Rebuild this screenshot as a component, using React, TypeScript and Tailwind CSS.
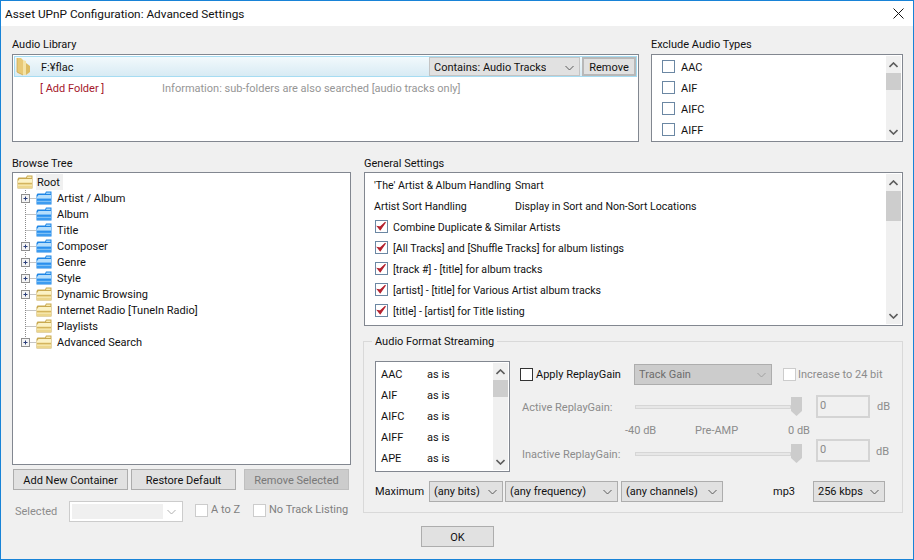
import React from "react";

type Tone = "yellow" | "blue";

const FONT = "font-['Roboto','Liberation_Sans',sans-serif]";

function Chevron({ up, color = "#6a6a6a", width = 1 }: { up?: boolean; color?: string; width?: number }) {
  return (
    <svg width="9" height="6" viewBox="0 0 9 6" fill="none" className="shrink-0">
      <path d={up ? "M0.5 5 L4.5 1 L8.5 5" : "M0.5 1 L4.5 5 L8.5 1"} stroke={color} strokeWidth={width} />
    </svg>
  );
}

function ScrollBar({ thumbHeight }: { thumbHeight: string }) {
  return (
    <div className="flex w-[15px] shrink-0 flex-col self-stretch bg-[#f0f0f0]">
      <div className="flex h-[17px] items-center justify-center">
        <Chevron up color="#5c5c5c" width={1.6} />
      </div>
      <div className="min-h-0 flex-1">
        <div className={`bg-[#cdcdcd] ${thumbHeight}`} />
      </div>
      <div className="flex h-[17px] items-center justify-center">
        <Chevron color="#5c5c5c" width={1.6} />
      </div>
    </div>
  );
}

function Check({ checked, disabled, dark }: { checked?: boolean; disabled?: boolean; dark?: boolean }) {
  const border = disabled ? "border-[#cccccc]" : dark ? "border-[#333333]" : "border-[#6b87a3]";
  return (
    <span className={`flex h-[13px] w-[13px] shrink-0 items-center justify-center border bg-white ${border}`}>
      {checked && (
        <svg width="11" height="11" viewBox="0 0 11 11">
          <path d="M1.5 5.5 L4.2 8.8 L9.5 1.2 L4.3 6 Z" fill="#b3202c" stroke="#b3202c" strokeWidth="1.1" />
        </svg>
      )}
    </span>
  );
}

function Combo({ label, className, disabled }: { label: string; className: string; disabled?: boolean }) {
  return (
    <div
      className={`flex shrink-0 items-center justify-between border pl-[4px] pr-[5px] ${
        disabled ? "border-[#adadad] bg-[#cccccc] text-[#6d6d6d]" : "border-[#adadad] bg-[#e1e1e1]"
      } ${className}`}
    >
      <span className="truncate">{label}</span>
      <Chevron color={disabled ? "#a0a0a0" : "#5a5a5a"} />
    </div>
  );
}

function Button({ label, className, disabled }: { label: string; className: string; disabled?: boolean }) {
  return (
    <button
      type="button"
      className={`flex shrink-0 items-center justify-center border pt-[2px] ${
        disabled ? "border-[#bfbfbf] bg-[#cccccc] text-[#787878]" : "border-[#adadad] bg-[#e1e1e1]"
      } ${className}`}
    >
      {label}
    </button>
  );
}

function Folder({ tone }: { tone: Tone }) {
  const edge = tone === "blue" ? "#1f86e6" : "#c9a950";
  const tab = tone === "blue" ? "#9bd2fa" : "#f8eab0";
  const top = tone === "blue" ? "#b5defc" : "#fbf2c6";
  const band = tone === "blue" ? "#2a8fee" : "#d3b45e";
  const low = tone === "blue" ? "#3d9cf0" : "#ecd68c";
  return (
    <svg width="16" height="14" viewBox="0 0 16 14" className="shrink-0">
      <path d="M0.5 4 L0.5 13.5 L15.5 13.5 L15.5 0.5 L10 0.5 L9 2.5 L1.5 2.5 Z" fill={edge} />
      <path d="M10.5 1.5 L14.5 1.5 L14.5 3 L10 3 Z" fill={tab} />
      <path d="M1 6 L2.5 4 L15 4 L15 13 L1 13 Z" fill={top} />
      <path d="M1 7.5 H15 V13 H1 Z" fill={low} />
      <path d="M1 8.5 H15" stroke={band} />
      <path d="M1 10.5 H15" stroke={top} strokeOpacity="0.55" />
    </svg>
  );
}

function SideFolder() {
  return (
    <svg width="15" height="19" viewBox="0 0 15 19" className="shrink-0">
      <path d="M1 1 L5 1 L7 3 L7 18 L2 16 L1 15 Z" fill="#e8c976" />
      <path d="M7 3 L10 4 L10 18 L7 18 Z" fill="#f4e3a6" />
      <path d="M10 6 L14 9 L14 15 L10 18 Z" fill="#dcbb62" />
      <path d="M1 1 L1 15 L7 18" fill="none" stroke="#c9a44e" strokeWidth="0.7" />
    </svg>
  );
}

function TreeRow({ label, tone, expander, last }: { label: string; tone: Tone; expander?: boolean; last?: boolean }) {
  return (
    <div className="flex h-[16px] items-center">
      <svg width="22" height="16" viewBox="0 0 22 16" className="shrink-0">
        <path d={last ? "M11.5 0 V8" : "M11.5 0 V16"} stroke="#8a8a8a" strokeDasharray="1 1" />
        <path d="M11.5 8.5 H22" stroke="#8a8a8a" strokeDasharray="1 1" />
        {expander && (
          <>
            <rect x="7.5" y="4.5" width="8" height="8" fill="#f4f4f4" stroke="#8f8f8f" />
            <path d="M9.5 8.5 H13.5 M11.5 6.5 V10.5" stroke="#2b3f7a" />
          </>
        )}
      </svg>
      <Folder tone={tone} />
      <span className="ml-[5px] whitespace-nowrap pt-[2px]">{label}</span>
    </div>
  );
}

function Slider({ className }: { className?: string }) {
  return (
    <div className={`flex h-[19px] w-[167px] shrink-0 items-center ${className ?? ""}`}>
      <div className="h-[4px] min-w-0 flex-1 border border-[#d6d6d6] bg-[#e7e7e7]" />
      <svg width="11" height="19" viewBox="0 0 11 19" className="shrink-0">
        <path d="M0 0 H11 V14 L5.5 19 L0 14 Z" fill="#cccccc" />
      </svg>
    </div>
  );
}

function NumberBox({ className }: { className?: string }) {
  return (
    <div className={`h-[23px] w-[54px] shrink-0 border-2 border-[#d4d4d4] bg-[#f0f0f0] pl-[2px] leading-[17px] text-[#8a8a8a] ${className ?? ""}`}>
      0
    </div>
  );
}

const excludeTypes = ["AAC", "AIF", "AIFC", "AIFF"];
const formats = ["AAC", "AIF", "AIFC", "AIFF", "APE"];
const generalChecks = [
  "Combine Duplicate & Similar Artists",
  "[All Tracks] and [Shuffle Tracks] for album listings",
  "[track #] - [title] for album tracks",
  "[artist] - [title] for Various Artist album tracks",
  "[title] - [artist] for Title listing",
];
const treeRows: { label: string; tone: Tone; expander?: boolean }[] = [
  { label: "Artist / Album", tone: "blue", expander: true },
  { label: "Album", tone: "blue" },
  { label: "Title", tone: "blue" },
  { label: "Composer", tone: "blue", expander: true },
  { label: "Genre", tone: "blue", expander: true },
  { label: "Style", tone: "blue", expander: true },
  { label: "Dynamic Browsing", tone: "yellow", expander: true },
  { label: "Internet Radio [TuneIn Radio]", tone: "yellow" },
  { label: "Playlists", tone: "yellow" },
];

export default function App() {
  return (
    <div className={`flex h-[560px] w-[914px] flex-col overflow-hidden border border-[#1883d7] bg-[#f0f0f0] text-[11px] leading-[18px] text-[#111111] ${FONT}`}>
      {/* title bar */}
      <div className="flex h-[25px] shrink-0 items-center justify-between bg-white pl-[4px] pr-[9px] text-[11.8px]">
        <span>Asset UPnP Configuration: Advanced Settings</span>
        <svg width="11" height="11" viewBox="0 0 11 11" fill="none">
          <path d="M0.5 0.5 L10.5 10.5 M10.5 0.5 L0.5 10.5" stroke="#111111" strokeWidth="1" />
        </svg>
      </div>

      <div className="flex min-h-0 flex-1 flex-col pl-[11px] pr-[10px]">
        {/* top row */}
        <div className="flex shrink-0 gap-[12px] pt-[11px]">
          <div className="w-[627px] shrink-0">
            <div className="h-[17px] leading-[16px]">Audio Library</div>
            <div className="h-[88px] border border-[#828790] bg-white p-[1px]">
              <div className="flex h-[21px] items-center border border-[#a6dcf2] bg-gradient-to-b from-[#f2f9fc] to-[#d8ebf4] pl-[1px]">
                <SideFolder />
                <span className="ml-[10px] min-w-0 flex-1 pt-[2px]">F:¥flac</span>
                <Combo label="Contains: Audio Tracks" className="h-[19px] w-[151px] border-[#c4c4c4] pt-[2px]" />
                <Button label="Remove" className="ml-[2px] h-[19px] w-[54px] border-2 border-[#b8b8b8]" />
              </div>
              <div className="flex h-[21px] items-center pt-[2px]">
                <span className="ml-[26px] w-[122px] text-[#a5182c]">[ Add Folder ]</span>
                <span className="text-[#969696]">Information: sub-folders are also searched [audio tracks only]</span>
              </div>
            </div>
          </div>
          <div className="w-[252px] shrink-0">
            <div className="h-[17px] leading-[16px]">Exclude Audio Types</div>
            <div className="flex h-[88px] border border-[#828790] bg-white p-[1px]">
              <div className="min-w-0 flex-1">
                {excludeTypes.map((t) => (
                  <div key={t} className="flex h-[21px] items-center pl-[9px]">
                    <Check />
                    <span className="ml-[6px] pt-[2px]">{t}</span>
                  </div>
                ))}
              </div>
              <ScrollBar thumbHeight="h-[17px]" />
            </div>
          </div>
        </div>

        {/* middle row */}
        <div className="mt-[14px] flex shrink-0 gap-[13px]">
          <div className="w-[339px] shrink-0">
            <div className="h-[16px] leading-[16px]">Browse Tree</div>
            <div className="h-[293px] border border-[#828790] bg-white pl-[1px] pt-[1px]">
              <div className="flex h-[16px] items-center pl-[3px]">
                <Folder tone="yellow" />
                <span className="ml-[3px] h-[16px] bg-[#f0f0f0] pl-[1px] pr-[3px]">Root</span>
              </div>
              {treeRows.map((r) => (
                <TreeRow key={r.label} {...r} />
              ))}
              <TreeRow label="Advanced Search" tone="yellow" expander last />
            </div>
            <div className="mt-[4px] flex pl-[1px]">
              <Button label="Add New Container" className="h-[21px] w-[115px]" />
              <Button label="Restore Default" className="ml-[3px] h-[21px] w-[105px]" />
              <Button label="Remove Selected" className="ml-[8px] h-[21px] w-[105px]" disabled />
            </div>
            <div className="mt-[11px] flex h-[21px] items-center text-[#7f7f7f]">
              <span className="w-[57px] pl-[3px] pt-[1px] text-[#8c8c8c]">Selected</span>
              <div className="flex h-[21px] w-[114px] shrink-0 items-center justify-between border border-[#cccccc] bg-white p-[2px] pr-[6px]">
                <div className="h-[15px] w-[91px] bg-[#f0f0f0]" />
                <Chevron color="#b0b0b0" />
              </div>
              <div className="mb-[3px] ml-[12px] flex items-center">
                <Check disabled />
                <span className="ml-[3px] w-[42px]">A to Z</span>
                <Check disabled />
                <span className="ml-[3px] whitespace-nowrap">No Track Listing</span>
              </div>
            </div>
          </div>

          <div className="w-[539px] shrink-0">
            <div className="h-[16px] leading-[16px]">General Settings</div>
            <div className="flex h-[154px] border border-[#828790] bg-white p-[1px] text-[10.6px]">
              <div className="min-w-0 flex-1">
                <div className="flex h-[21px] items-center pl-[8px] pt-[2px]">
                  <span className="w-[141px] whitespace-nowrap">'The' Artist &amp; Album Handling</span>
                  <span>Smart</span>
                </div>
                <div className="flex h-[21px] items-center pl-[8px] pt-[2px]">
                  <span className="w-[141px]">Artist Sort Handling</span>
                  <span>Display in Sort and Non-Sort Locations</span>
                </div>
                {generalChecks.map((label) => (
                  <div key={label} className="flex h-[21px] items-center pl-[9px]">
                    <Check checked />
                    <span className="ml-[5px] pt-[2px]">{label}</span>
                  </div>
                ))}
              </div>
              <ScrollBar thumbHeight="h-[30px]" />
            </div>

            <fieldset className="-ml-[1px] mt-[7px] w-[540px] border border-[#d9d9d9] pb-[10px] pl-[11px] pt-[12px]">
              <legend className="-ml-[3px] px-[3px] leading-[16px]">
                <span className="relative top-[1px]">Audio Format Streaming</span>
              </legend>
              <div className="flex">
                <div className="flex h-[111px] w-[135px] shrink-0 border border-[#828790] bg-white p-[1px]">
                  <div className="min-w-0 flex-1">
                    {formats.map((f) => (
                      <div key={f} className="flex h-[21px] items-center pl-[4px] pt-[3px]">
                        <span className="w-[46px]">{f}</span>
                        <span>as is</span>
                      </div>
                    ))}
                  </div>
                  <ScrollBar thumbHeight="h-[17px]" />
                </div>

                <div className="ml-[10px] min-w-0 flex-1 pt-[3px] text-[#8c8c8c]">
                  <div className="flex h-[21px] items-center">
                    <Check dark />
                    <span className="ml-[3px] w-[98px] text-[#111111]">Apply ReplayGain</span>
                    <Combo label="Track Gain" className="h-[21px] w-[138px]" disabled />
                    <span className="ml-[11px]">
                      <Check disabled />
                    </span>
                    <span className="ml-[2px] whitespace-nowrap">Increase to 24 bit</span>
                  </div>
                  <div className="mt-[10px] flex h-[23px] items-center">
                    <span className="w-[115px] pl-[2px] pt-[2px]">Active ReplayGain:</span>
                    <Slider />
                    <NumberBox className="ml-[14px]" />
                    <span className="ml-[7px]">dB</span>
                  </div>
                  <div className="h-[21px] pl-[105px] pt-[4px]">
                    <div className="flex">
                      <span className="w-[70px]">-40 dB</span>
                      <span className="w-[93px]">Pre-AMP</span>
                      <span>0 dB</span>
                    </div>
                  </div>
                  <div className="flex h-[23px] items-start">
                    <span className="w-[115px] pl-[2px] pt-[7px]">Inactive ReplayGain:</span>
                    <Slider className="mt-[5px]" />
                    <NumberBox className="ml-[14px]" />
                    <span className="ml-[6px] pt-[4px]">dB</span>
                  </div>
                </div>
              </div>

              <div className="mt-[9px] flex h-[21px] items-center">
                <span className="w-[54px]">Maximum</span>
                <Combo label="(any bits)" className="h-[21px] w-[74px]" />
                <Combo label="(any frequency)" className="ml-[2px] h-[21px] w-[113px]" />
                <Combo label="(any channels)" className="ml-[3px] h-[21px] w-[102px]" />
                <span className="ml-[50px] w-[40px]">mp3</span>
                <Combo label="256 kbps" className="h-[21px] w-[72px]" />
              </div>
            </fieldset>
          </div>
        </div>

        <div className="mt-[4px] flex shrink-0 justify-center">
          <Button label="OK" className="h-[21px] w-[73px]" />
        </div>
      </div>
    </div>
  );
}
